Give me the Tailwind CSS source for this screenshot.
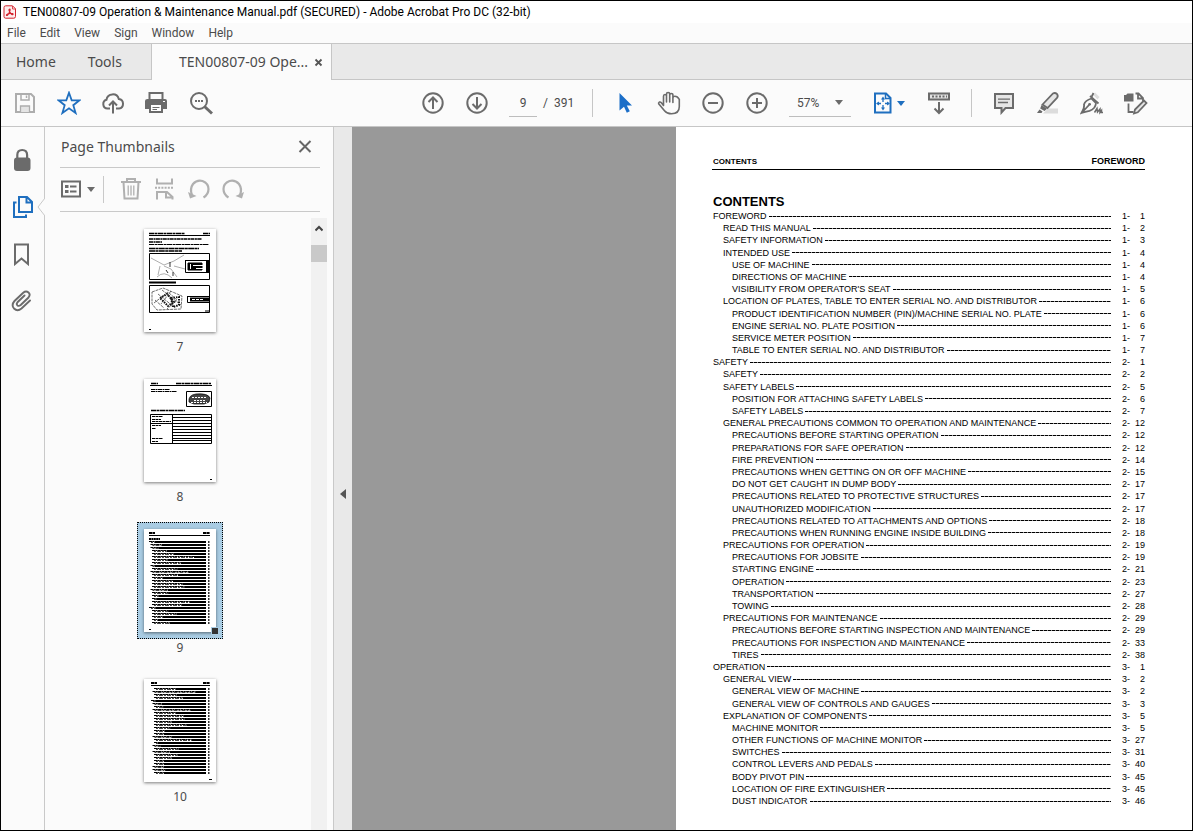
<!DOCTYPE html>
<html lang="en">
<head>
<meta charset="utf-8">
<meta name="viewport" content="width=device-width, initial-scale=1">
<title>TEN00807-09 Operation &amp; Maintenance Manual.pdf</title>
<script src="https://cdn.jsdelivr.net/npm/@tailwindcss/browser@4"></script>
</head>
<body class="flex h-screen flex-col overflow-hidden border border-black bg-[#fbfbfb] font-['Noto_Sans',sans-serif] text-[#4b4b4b]">

<header class="shrink-0">
  <div class="flex h-[22px] items-center gap-[6px] bg-white pl-[2px] font-[Roboto,sans-serif] text-xs text-black">
    <svg class="size-[14px]" viewBox="0 0 14 14" fill="none" stroke="#d3232e"><path d="M1 2.5Q1 .8 2.7.8H9.5L12.5 3.8V11.5Q12.5 13.2 10.8 13.2H2.7Q1 13.2 1 11.5Z" fill="#fdeeee"/><path d="M9.5 1V4h3" stroke-width=".8"/><path d="M6.3 4.2c1.2-.5.9 1.500-.1 3.600C5.300 9.700 3.800 11 3.400 10.300c-.3-.7 2.200-1.800 4-2 1.500-.1 3 .5 2.600 1.100-.6.7-2.200-.7-3-2C6.200 6.100 5.500 4.500 6.300 4.200Z" stroke-width="1.2"/></svg>
    <h1>TEN00807-09 Operation &amp; Maintenance Manual.pdf (SECURED) - Adobe Acrobat Pro DC (32-bit)</h1>
  </div>
  <nav class="flex h-5 items-center gap-[14px] pl-[6px] font-[Roboto,sans-serif] text-xs" aria-label="Menu">
    <button>File</button><button>Edit</button><button>View</button><button>Sign</button><button>Window</button><button>Help</button>
  </nav>
  <div class="flex h-[37px] border-t border-[#c6c6c6] bg-[#e9e9e9] text-sm" role="tablist">
    <div class="flex w-[151px] gap-8 border-r border-b border-[#c6c6c6] pl-[15px]">
      <button role="tab">Home</button><button role="tab">Tools</button>
    </div>
    <div class="flex w-[180px] items-center justify-between border-r border-[#c6c6c6] bg-[#fbfbfb] pr-2 pl-[27px]">
      <button role="tab" aria-selected="true">TEN00807-09 Ope...</button>
      <button aria-label="Close tab"><svg class="size-[9px]" viewBox="0 0 9 9" stroke="#555" stroke-width="1.800"><path d="M1.500 1.500l6 6M7.500 1.500l-6 6"/></svg></button>
    </div>
    <div class="flex-1 border-b border-[#c6c6c6]"></div>
  </div>
</header>

<div class="flex h-[47px] shrink-0 items-center border-b border-[#c6c6c6] pl-[2px] text-[#6b6b6b]" role="toolbar" aria-label="Main toolbar">
  <button class="grid w-11 place-items-center" aria-label="Save"><svg class="size-6" viewBox="0 0 24 24" fill="none" stroke="#adadad" stroke-width="2"><path d="M3 3H18L21 6V21H3Z"/><path d="M8 3V9H16V3M13.500 4.500V7" stroke-width="1.500"/><path d="M7.500 21V15H16.500V21" fill="#e4e4e4" stroke-width="1.300"/></svg></button>
  <button class="grid w-11 place-items-center" aria-label="Star"><svg class="size-6" viewBox="0 0 24 24" fill="none" stroke="#1f6fbf" stroke-width="1.800"><path d="M12 1.800L14.700 9.300H22.600L16.300 14.200L18.600 22L12 17.300L5.400 22L7.700 14.200L1.400 9.300H9.300Z"/></svg></button>
  <button class="grid w-11 place-items-center" aria-label="Upload to cloud"><svg class="size-6" viewBox="0 0 24 24" fill="none" stroke="currentColor" stroke-width="2"><path d="M9 17.500H6.500A4.500 4.500 0 0 1 5.500 8.700A6.300 6.300 0 0 1 17.800 8A4.800 4.800 0 0 1 18 17.500H15M12 22.500V11M8 14.500L12 10.500L16 14.500"/></svg></button>
  <button class="grid w-11 place-items-center" aria-label="Print"><svg class="size-6" viewBox="0 0 24 24" fill="none" stroke="currentColor"><path d="M4.500 8V2H17.500V8" stroke-width="2"/><path d="M2.500 8H20Q22 8 22 10V18H18V14H4V18H0V10Q0 8 2.500 8Z" fill="currentColor" stroke="none"/><path d="M5 14V21H17V14" fill="#fff" stroke-width="2"/><path d="M7.500 16.500H14.500M7.500 18.500H12" stroke-width="1"/><path d="M18 10.500H20" stroke="#fff"/></svg></button>
  <button class="grid w-11 place-items-center" aria-label="Find"><svg class="size-6" viewBox="0 0 24 24" fill="none" stroke="currentColor" stroke-width="2"><circle cx="10" cy="10" r="8"/><path d="M15.500 15.500L23 22.500" stroke-width="3"/><path d="M6 10h2M9 10h2M12 10h2"/></svg></button>

  <button class="ml-[188px] grid w-11 place-items-center" aria-label="Previous page"><svg class="size-6" viewBox="0 0 24 24" fill="none" stroke="currentColor" stroke-width="2"><circle cx="12" cy="12" r="9.700"/><path d="M12 18V7M7.500 11L12 6.500L16.500 11"/></svg></button>
  <button class="grid w-11 place-items-center" aria-label="Next page"><svg class="size-6" viewBox="0 0 24 24" fill="none" stroke="currentColor" stroke-width="2"><circle cx="12" cy="12" r="9.700"/><path d="M12 6V17M7.500 13L12 17.500L16.500 13"/></svg></button>
  <div class="ml-[10px] flex h-7 items-center font-[Roboto,sans-serif] text-xs text-[#4b4b4b]">
    <input class="h-7 w-7 border-b border-[#bdbdbd] text-center" aria-label="Page number" value="9">
    <span class="ml-[6px] w-12 whitespace-pre">/  391</span>
  </div>
  <div class="ml-[1px] h-7 w-px bg-[#c6c6c6]"></div>
  <button class="ml-[10px] grid w-11 place-items-center" aria-label="Select"><svg class="size-6" viewBox="0 0 24 24"><path d="M6.500 2L19 14.500H13.800L16.800 20.300L13.800 21.700L11 15.800L6.500 19.500Z" fill="#1b6ec8"/></svg></button>
  <button class="grid w-11 place-items-center" aria-label="Pan"><svg class="size-6" viewBox="0 0 24 24" fill="none" stroke="currentColor" stroke-width="1.600" stroke-linecap="round"><path d="M6.500 14.500V5.200Q6.500 3.500 8 3.500T9.500 5.200V11M9.500 5V3.100Q9.500 1.500 11.100 1.500T12.700 3.100V11M12.700 4.100Q12.700 2.500 14.300 2.500T15.900 4.100V11.500M15.900 11.500V7.100Q15.900 5.300 17.900 5.300Q20.500 5.300 22.300 8.300V15.500Q22.300 22.800 14.500 22.800Q10 22.800 7.500 19.700L1.700 12.800Q1.200 11.700 2.300 11.100Q3.500 10.700 4.600 12L6.500 14.500"/></svg></button>
  <button class="grid w-11 place-items-center" aria-label="Zoom out"><svg class="size-6" viewBox="0 0 24 24" fill="none" stroke="currentColor" stroke-width="2"><circle cx="12" cy="12" r="9.700"/><path d="M7 12H17"/></svg></button>
  <button class="grid w-11 place-items-center" aria-label="Zoom in"><svg class="size-6" viewBox="0 0 24 24" fill="none" stroke="currentColor" stroke-width="2"><circle cx="12" cy="12" r="9.700"/><path d="M7 12H17M12 7V17"/></svg></button>
  <button class="ml-[10px] flex h-7 w-[62px] items-center justify-between border-b border-[#bdbdbd] px-2 font-[Roboto,sans-serif] text-xs text-[#4b4b4b]" aria-label="Zoom level">57%<svg class="h-[5px] w-2" viewBox="0 0 8 5"><path d="M0 0H8L4 5Z" fill="#6b6b6b"/></svg></button>
  <button class="ml-[21px] flex w-[33px] items-center justify-between" aria-label="Fit page"><svg class="size-[22px]" viewBox="0 0 22 22" fill="none" stroke="#1f6fbf" stroke-width="2"><path d="M3 1.500H14L18.500 6V20.500H3Z"/><path d="M13.500 2V6.500H18" stroke-width="1.500"/><path d="M11 6V10M11 13V17M5 11.500H9M13 11.500H17" stroke-width="1.300"/><path d="M11 4.500L13 7.500H9ZM11 18.500L13 15.500H9ZM4 11.500L7 9.500V13.500ZM18 11.500L15 9.500V13.500Z" fill="#1f6fbf" stroke="none"/></svg><svg class="h-[5px] w-2" viewBox="0 0 8 5"><path d="M0 0H8L4 5Z" fill="#1f6fbf"/></svg></button>
  <button class="ml-[12px] grid w-11 place-items-center" aria-label="Scroll mode"><svg class="size-6" viewBox="0 0 24 24" fill="none" stroke="currentColor" stroke-width="2"><path d="M2 2.500H22V8.500H2Z" fill="#e2e2e2"/><path d="M5 5.500H20" stroke-dasharray="2 1.500"/><path d="M12 11V22M7.500 17.500L12 22L16.500 17.500"/></svg></button>
  <div class="ml-[10px] h-7 w-px bg-[#c6c6c6]"></div>
  <button class="ml-[10px] grid w-11 place-items-center" aria-label="Comment"><svg class="size-6" viewBox="0 0 24 24" fill="#e6e6e6" stroke="currentColor" stroke-width="2"><path d="M3 3H21V17H13.500L9.500 21.500V17H3Z"/><path d="M6 8.200H18M6 11.500H16" stroke-width="1.300"/></svg></button>
  <button class="grid w-11 place-items-center" aria-label="Highlight"><svg class="size-6" viewBox="0 0 24 24" fill="none" stroke="currentColor" stroke-width="1.800"><path d="M7 22.500H22V17.500H12Z" fill="#dcdcdc" stroke="none"/><path d="M6.500 13.500L17 2.500Q19 1.300 21 3Q22.500 5 21 6.800L11.500 17Z" fill="#e6e6e6"/><path d="M5.500 14L11 17.800L8.500 20L4.200 17.500Z" fill="currentColor" stroke="none"/><path d="M3.500 18.500L6.500 20.500L5.500 22H1Z" fill="currentColor" stroke="none"/></svg></button>
  <button class="grid w-11 place-items-center" aria-label="Sign"><svg class="size-6" viewBox="0 0 24 24" fill="none" stroke="currentColor" stroke-width="1.800"><path d="M13.500 4L17.500 8.500L19.500 6L15 1.500Z" fill="#dedede" stroke="none"/><path d="M1.500 22L2.500 20Q4.500 17 4 13.500Q5 9.500 11.500 7.500L16 12Q15.500 18 9.500 19.800Q5 20.800 1.500 22ZM2.500 21L9 14"/><circle cx="9.600" cy="13.300" r="1.400" fill="currentColor" stroke="none"/><path d="M10 5L18.500 12.500M11.500 6L13.500 2"/><path d="M14.500 21.500L17 17.500L17.500 21L20 18L20 21.500L21.500 19.500V21.500H23" stroke-width="1.500"/></svg></button>
  <button class="grid w-11 place-items-center" aria-label="Edit document"><svg class="size-6" viewBox="0 0 24 24" fill="none" stroke="currentColor" stroke-width="1.800"><path d="M0 4H2L3.500 2.500H9.500V10.500H0Z" fill="currentColor" stroke="none"/><path d="M11.500 2.500H14.500L19 7V10M14 3V7.500H18.500M4.500 12.500V21H9.500"/><path d="M10 22.500L11 18.500L20 9.500L22.500 12L13.800 21.300Z" fill="#e6e6e6"/></svg></button>
</div>

<main class="flex min-h-0 flex-1">
  <nav class="relative flex w-11 shrink-0 flex-col items-center gap-[23px] border-r border-[#c9c9c9] pt-[21px] pr-px text-[#6b6b6b]" aria-label="Navigation panes">
    <button aria-label="Security"><svg class="size-6" viewBox="0 0 24 24" fill="none"><rect x="4" y="9.500" width="16.500" height="13.500" rx="3" fill="currentColor"/><path d="M7.300 11V7Q7.300 2 12.200 2T17.100 7V11" stroke="currentColor" stroke-width="2.200"/></svg></button>
    <button aria-label="Page thumbnails"><svg class="size-6" viewBox="0 0 24 24" fill="none" stroke="#1f6fbf" stroke-width="2"><path d="M9 2H17L22 7V17H9ZM16.500 2V7.500H22M6.500 7.500H4V22H16V19.500"/></svg></button>
    <button aria-label="Bookmarks"><svg class="size-6" viewBox="0 0 24 24" fill="none" stroke="currentColor" stroke-width="2"><path d="M5 2.500H18V22L11.500 16.500L5 22Z"/></svg></button>
    <button aria-label="Attachments"><svg class="size-6" viewBox="0 0 24 24" fill="none" stroke="currentColor" stroke-width="1.900" stroke-linecap="round"><path d="M14.500 6.500L7.500 13.200Q6 15.200 7.500 16.400Q9 17.500 10.700 16L18.500 8.500Q20.800 5.600 18.500 3.500Q16 1.500 13.200 3.800L4.500 12Q1 16 4 19.500Q7.500 22.800 11.500 19.500L20 11.500"/></svg></button>
    <svg class="absolute top-[71px] -right-px h-[18px] w-2" viewBox="0 0 8 18"><path d="M8 0L1 9L8 18Z" fill="#fbfbfb"/><path d="M8 0L1 9L8 18" fill="none" stroke="#c9c9c9"/></svg>
  </nav>

  <section class="flex w-[289px] shrink-0 flex-col border-r border-[#c9c9c9] pl-[15px]" aria-label="Page Thumbnails">
    <div class="mr-[13px] flex h-[41px] items-center justify-between border-b border-[#c9c9c9] pr-2 pl-px">
      <h2 class="text-sm">Page Thumbnails</h2>
      <button aria-label="Close panel"><svg class="size-[14px]" viewBox="0 0 14 14" stroke="#666" stroke-width="2"><path d="M1.500 1l11 11M12.500 1l-11 11"/></svg></button>
    </div>
    <div class="mr-[13px] flex h-11 items-center border-b border-[#c9c9c9] pb-px text-[#b0b0b0]">
      <button class="flex w-[35px] items-center justify-between pl-px" aria-label="Options"><svg class="h-[18px] w-5" viewBox="0 0 20 18" fill="none" stroke="#6b6b6b" stroke-width="2"><path d="M1 1.500H19V16.500H1Z"/><path d="M9 6.500H15.500M9 11.500H15.500" stroke-width="1.800"/><path d="M4 6.500H7.500M4 11.500H7.500" stroke-width="3"/></svg><svg class="h-[5px] w-2" viewBox="0 0 8 5"><path d="M0 0H8L4 5Z" fill="#6b6b6b"/></svg></button>
      <div class="ml-2 h-[27px] w-px bg-[#c9c9c9]"></div>
      <div class="ml-[15px] flex gap-[10px]">
        <button aria-label="Delete"><svg class="size-6" viewBox="0 0 24 24" fill="none" stroke="currentColor" stroke-width="2"><path d="M2 5H22M8 5V2H16V5M4.500 5L5.500 21.500H18.500L19.500 5"/><path d="M9.200 8.500V18.500M12 8.500V18.500M14.800 8.500V18.500" stroke-width="1.300"/></svg></button>
        <button aria-label="Insert page"><svg class="size-6" viewBox="0 0 24 24" fill="none" stroke="currentColor" stroke-width="2"><path d="M4 1.500V6.500H19V1.500M4 22.500V15H14L19.500 20V22.500M13 15V20.500H19"/><path d="M2 10.800H21" stroke-dasharray="2 1.200"/></svg></button>
        <button aria-label="Rotate left"><svg class="size-6" viewBox="0 0 24 24" fill="none" stroke="currentColor" stroke-width="2.200"><path d="M5 18Q2.500 12 6 7Q10 2.500 15.500 4Q21.500 6.500 21.500 12Q21.500 17.500 16.500 20.500"/><path d="M1 15L9.500 19L3 21.500Z" fill="currentColor" stroke="none"/></svg></button>
        <button aria-label="Rotate right"><svg class="size-6" viewBox="0 0 24 24" fill="none" stroke="currentColor" stroke-width="2.200"><path d="M19 18Q21.500 12 18 7Q14 2.500 8.500 4Q2.500 6.500 2.500 12Q2.500 17.500 7.500 20.500"/><path d="M23 15L14.500 19L21 21.500Z" fill="currentColor" stroke="none"/></svg></button>
      </div>
    </div>
    <div class="flex min-h-0 flex-1 justify-end pt-[6px] pr-[6px]">
      <ol class="mr-[88px] flex w-[86px] flex-col overflow-hidden text-center text-xs">
        <li class="flex h-[150px] shrink-0 flex-col items-center gap-[7px] pt-[11px]">
          <svg class="h-[103px] w-[72px] bg-white shadow-[0_1px_3px_rgba(0,0,0,0.5)]" viewBox="0 0 72 103" fill="none" stroke="#000">
            <path d="M5 4.500H41M59 4.500H66" stroke-width="1.500" stroke-dasharray="5 .5 3 .5"/><path d="M5 6.500H66"/>
            <path d="M5 10H58M5 13H18" stroke-width="1.500" stroke-dasharray="4 .5 2 .4"/><path d="M5 15.500H65" stroke-dasharray="5 .6 3 .4"/><path d="M5 19.500H55M5 22H38" stroke-width="1.500" stroke-dasharray="6 .4 3 .4"/>
            <path d="M5.500 24.500H65.500V50.500H5.500ZM5.500 56.500H65.500V83.500H5.500Z"/><path d="M5 53.500H32" stroke-width="2"/>
            <path d="M7 29L20 36L30 32L40 26M16 37L14 46M20 37L27 40L33 48M13 48Q20 41 28 49M30 37L41 40" stroke="#777" stroke-width=".6"/><path d="M26 33V38M22 41L24 44M29 43V47" stroke-width=".8"/>
            <path d="M41.500 31.500H66M41.500 31V43.500H66"/><path d="M44 34H58V41H44Z" fill="#000"/><path d="M49 36.500H60M46.500 40V35M52 39.500H62" stroke="#fff"/><path d="M63.500 31V43" stroke-width="3"/>
            <path d="M8 63L19 59L38 67L37 80L13 81L8 75ZM10 74L24 63L33 71L23 80M14 65L30 78M18 61L37 76M11 71L20 79M27 62L17 75" stroke="#333" stroke-width=".7" stroke-dasharray="3 .8"/><path d="M16 69L23 65L30 73L24 77ZM27 69L35 68L35 76L29 78Z" stroke="#111" stroke-width="2" stroke-dasharray="1.500 1"/>
            <path d="M43.500 67.500H65M43.500 67V73.500H65"/><path d="M46 70.500H65" stroke-width="4"/><path d="M48 70.500H60" stroke="#fff" stroke-dasharray="3 1"/><path d="M5 100.500H7M61 82H65"/>
          </svg><span>7</span>
        </li>
        <li class="flex h-[150px] shrink-0 flex-col items-center gap-[7px] pt-[11px]">
          <svg class="h-[103px] w-[72px] bg-white shadow-[0_1px_3px_rgba(0,0,0,0.5)]" viewBox="0 0 72 103" fill="none" stroke="#000">
            <path d="M7 4.500H14M32 4.500H67" stroke-width="1.500" stroke-dasharray="5 .5 3 .5"/><path d="M6 6.500H68"/><path d="M7 10.500H26M7 12.500H33" stroke-dasharray="4 .5 2 .5"/>
            <path d="M42.500 12.500H67.500V27.500H42.500Z"/><path d="M45 23Q44 16 52 15Q64 14 66 19L65 23L60 25H50Z" fill="#444" stroke-width=".7"/><path d="M48 18.500H62M50 21.500H61M47 23.500H63" stroke="#fff" stroke-dasharray="2 1"/>
            <path d="M7 31.500H41" stroke-width="1.500" stroke-dasharray="5 .5 3 .5"/><path d="M6.500 35.500H67.500V64.500H6.500ZM28.500 36V65M29 38.500H68M29 41.500H68M7 44.500H68M29 47.500H68M29 50.500H68M29 53.500H68M29 56.500H68M29 59.500H68M29 61.500H68"/>
            <path d="M8 37.500H19M8 40.500H17M8 42.500H27M8 46.500H17M8 49.500H12M8 59.500H19M8 62.500H14M66 100.500H68" stroke-dasharray="3 .5"/>
          </svg><span>8</span>
        </li>
        <li class="flex h-[150px] shrink-0 flex-col items-center gap-px pt-[4px]">
          <div class="relative flex w-full justify-center border border-dotted border-black bg-[#a9cce3] pt-[6px] pb-[6px]">
            <svg id="thumb9" class="h-[103px] w-[72px] bg-white shadow-[0_1px_3px_rgba(0,0,0,0.5)]" viewBox="0 0 72 103" fill="none" stroke="#000"></svg>
            <span class="absolute right-[3px] bottom-[3px] size-[8px] border border-[#a9cce3] bg-[#333]"></span>
          </div><span>9</span>
        </li>
        <li class="flex h-[150px] shrink-0 flex-col items-center gap-[7px] pt-[11px]">
          <svg id="thumb10" class="h-[103px] w-[72px] bg-white shadow-[0_1px_3px_rgba(0,0,0,0.5)]" viewBox="0 0 72 103" fill="none" stroke="#000"></svg><span>10</span>
        </li>
      </ol>
      <div class="w-4 bg-[#f1f1f1] pt-[3px]">
        <button class="grid h-[15px] w-4 place-items-center" aria-label="Scroll up"><svg class="h-[7px] w-2" viewBox="0 0 8 7" fill="none" stroke="#444" stroke-width="2"><path d="M.5 5.500L4 2L7.500 5.500"/></svg></button>
        <div class="mt-[9px] h-[17px] bg-[#c9c9c9]"></div>
      </div>
    </div>
  </section>

  <button class="grid w-[18px] shrink-0 place-items-center bg-[#e9e9e9] pt-[30px]" aria-label="Collapse panel"><svg class="h-[10px] w-[6px]" viewBox="0 0 6 10"><path d="M6 0V10L0 5Z" fill="#555"/></svg></button>

  <div class="flex min-w-0 flex-1 bg-[#999] pl-[324px]">
    <article class="flex flex-1 flex-col bg-white pt-[27px] pr-[47px] pb-[23px] pl-9 font-['Liberation_Sans',Arial,sans-serif] text-black">
      <div class="flex h-4 items-center justify-between border-b border-black pl-px font-bold">
        <span class="text-[8px]">CONTENTS</span><span class="text-[9px]">FOREWORD</span>
      </div>
      <h2 class="mt-6 pl-px text-[13px] leading-4 font-bold">CONTENTS</h2>
      <ol id="toc" class="flex min-h-0 flex-1 flex-col justify-between text-[9px] leading-3"></ol>
    </article>
  </div>
</main>

<script>
const toc = [
 [0,'FOREWORD','1-','1'],[1,'READ THIS MANUAL','1-','2'],[1,'SAFETY INFORMATION','1-','3'],[1,'INTENDED USE','1-','4'],
 [2,'USE OF MACHINE','1-','4'],[2,'DIRECTIONS OF MACHINE','1-','4'],[2,"VISIBILITY FROM OPERATOR'S SEAT",'1-','5'],
 [1,'LOCATION OF PLATES, TABLE TO ENTER SERIAL NO. AND DISTRIBUTOR','1-','6'],
 [2,'PRODUCT IDENTIFICATION NUMBER (PIN)/MACHINE SERIAL NO. PLATE','1-','6'],[2,'ENGINE SERIAL NO. PLATE POSITION','1-','6'],
 [2,'SERVICE METER POSITION','1-','7'],[2,'TABLE TO ENTER SERIAL NO. AND DISTRIBUTOR','1-','7'],
 [0,'SAFETY','2-','1'],[1,'SAFETY','2-','2'],[1,'SAFETY LABELS','2-','5'],[2,'POSITION FOR ATTACHING SAFETY LABELS','2-','6'],[2,'SAFETY LABELS','2-','7'],
 [1,'GENERAL PRECAUTIONS COMMON TO OPERATION AND MAINTENANCE','2-','12'],[2,'PRECAUTIONS BEFORE STARTING OPERATION','2-','12'],
 [2,'PREPARATIONS FOR SAFE OPERATION','2-','12'],[2,'FIRE PREVENTION','2-','14'],[2,'PRECAUTIONS WHEN GETTING ON OR OFF MACHINE','2-','15'],
 [2,'DO NOT GET CAUGHT IN DUMP BODY','2-','17'],[2,'PRECAUTIONS RELATED TO PROTECTIVE STRUCTURES','2-','17'],[2,'UNAUTHORIZED MODIFICATION','2-','17'],
 [2,'PRECAUTIONS RELATED TO ATTACHMENTS AND OPTIONS','2-','18'],[2,'PRECAUTIONS WHEN RUNNING ENGINE INSIDE BUILDING','2-','18'],
 [1,'PRECAUTIONS FOR OPERATION','2-','19'],[2,'PRECAUTIONS FOR JOBSITE','2-','19'],[2,'STARTING ENGINE','2-','21'],[2,'OPERATION','2-','23'],
 [2,'TRANSPORTATION','2-','27'],[2,'TOWING','2-','28'],[1,'PRECAUTIONS FOR MAINTENANCE','2-','29'],
 [2,'PRECAUTIONS BEFORE STARTING INSPECTION AND MAINTENANCE','2-','29'],[2,'PRECAUTIONS FOR INSPECTION AND MAINTENANCE','2-','33'],[2,'TIRES','2-','38'],
 [0,'OPERATION','3-','1'],[1,'GENERAL VIEW','3-','2'],[2,'GENERAL VIEW OF MACHINE','3-','2'],[2,'GENERAL VIEW OF CONTROLS AND GAUGES','3-','3'],
 [1,'EXPLANATION OF COMPONENTS','3-','5'],[2,'MACHINE MONITOR','3-','5'],[2,'OTHER FUNCTIONS OF MACHINE MONITOR','3-','27'],[2,'SWITCHES','3-','31'],
 [2,'CONTROL LEVERS AND PEDALS','3-','40'],[2,'BODY PIVOT PIN','3-','45'],[2,'LOCATION OF FIRE EXTINGUISHER','3-','45'],[2,'DUST INDICATOR','3-','46']
];
const indent = ['pl-px', 'pl-[11px]', 'pl-5'];
document.getElementById('toc').innerHTML = toc.map(([level, title, chapter, page]) =>
  `<li class="flex items-center ${indent[level]}"><span class="whitespace-nowrap">${title}</span><span class="ml-[2px] mr-[11px] h-px flex-1 bg-[repeating-linear-gradient(90deg,#000_0_3px,#999_3px_4px)]"></span><span class="w-3">${chapter}</span><span class="w-[11px] text-right">${page}</span></li>`).join('');

/* Miniature contents pages for the thumbnail strip: solid leader bars, three pixels apart */
function miniature(id, top, rows, left) {
  let s = `<path d="M${left} 4H${left + 6}M59 4H66" stroke-width="2" stroke-dasharray="3 .4"/><path d="M${left} 6.500H66"/>`;
  if (id === 'thumb9') s += '<path d="M5 10H16" stroke-width="2" stroke-dasharray="2 .4"/>';
  for (let i = 0; i * 3 + top < 95; i++) {
    const [level, title] = rows[Math.floor(i * 1.7)];
    const y = top + i * 3, x = left + level * 1.5, end = x + title.length * 0.7;
    s += `<path d="M${x} ${y + 0.5}H${end}" stroke-dasharray="3 .3 2 .3"/><path d="M${x + 2} ${y + 1.5}H${end}" stroke="#444" stroke-dasharray="2 1 4 1"/><path d="M${end} ${y + 1}H62" stroke-width="2"/><path d="M64 ${y + 1}H66" stroke-width="2" stroke="#333" stroke-dasharray="1 .5"/>`;
  }
  s += id === 'thumb9' ? '<path d="M5 100.500H7"/>' : '<path d="M65 100.500H68"/>';
  document.getElementById(id).innerHTML = s;
}
miniature('thumb9', 12, toc, 5);
miniature('thumb10', 9, toc.slice(6).concat(toc.slice(0, 12)), 7);
</script>
</body>
</html>
